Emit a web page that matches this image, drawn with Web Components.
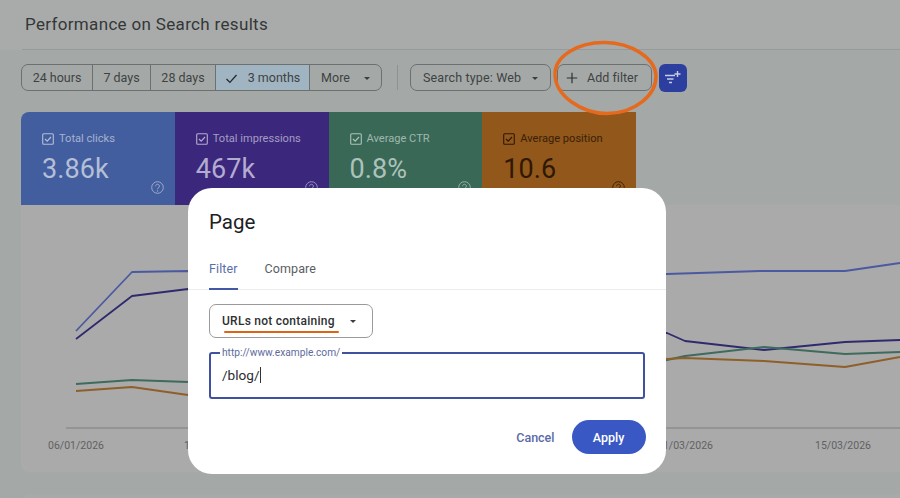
<!DOCTYPE html>
<html>
<head>
<meta charset="utf-8">
<title>Performance on Search results</title>
<style>
  html, body { margin: 0; height: 100%; }
  body { width: 900px; height: 498px; overflow: hidden; background: #a4a9a7; font-family: Roboto, "Liberation Sans", sans-serif; }
</style>
</head>
<body>
<gsc-page>
  <gsc-header slot="header" heading="Performance on Search results"></gsc-header>
  <gsc-toolbar slot="toolbar"></gsc-toolbar>
  <div slot="metrics" style="display:flex;width:615px">
    <metric-card label="Total clicks" value="3.86k" bg="#425e9f" fg="#b5bfd6" first></metric-card>
    <metric-card label="Total impressions" value="467k" bg="#3b287c" fg="#b3acd0"></metric-card>
    <metric-card label="Average CTR" value="0.8%" bg="#3a6857" fg="#adc2ba"></metric-card>
    <metric-card label="Average position" value="10.6" bg="#91571b" fg="#2f1804"></metric-card>
  </div>
  <gsc-chart slot="chart"></gsc-chart>
  <filter-dialog slot="overlay"></filter-dialog>
  <add-filter-mark slot="overlay"></add-filter-mark>
</gsc-page>

<script>
// page shell
const pageTemplate = document.createElement('template');
pageTemplate.innerHTML = `
  <style>
    :host { display: block; position: relative; width: 900px; height: 498px; overflow: hidden; background: #a4a9a7; }
    .top { background: #a9abaa; height: 50px; }
    .body { padding: 14px 0 0 21px; display: flex; flex-direction: column; }
    .metrics { margin-top: 21px; }
    .next { position: absolute; left: 24px; right: 0; top: 494px; height: 4px; background: #a8a9a9; border-radius: 8px 0 0 0; }
  </style>
  <div class="top"><slot name="header"></slot></div>
  <div class="body">
    <slot name="toolbar"></slot>
    <div class="metrics"><slot name="metrics"></slot></div>
    <slot name="chart"></slot>
  </div>
  <div class="next"></div>
  <slot name="overlay"></slot>
`;
class GscPage extends HTMLElement {
  constructor() {
    super();
    this.attachShadow({ mode: 'open' }).appendChild(pageTemplate.content.cloneNode(true));
  }
}
customElements.define('gsc-page', GscPage);

// title row
class GscHeader extends HTMLElement {
  constructor() {
    super();
    this.attachShadow({ mode: 'open' }).innerHTML = `
      <style>
        :host { display: block; height: 50px; box-sizing: border-box; margin-left: 22px; padding: 14px 0 0 3px; border-bottom: 1px solid #979a9a; color: #343737; font: 400 17px/21px Roboto, sans-serif; letter-spacing: .33px; }
      </style>
      <div id="t"></div>`;
  }
  connectedCallback() {
    this.shadowRoot.getElementById('t').textContent = this.getAttribute('heading') || '';
  }
}
customElements.define('gsc-header', GscHeader);

// date chips and filters
class GscToolbar extends HTMLElement {
  constructor() {
    super();
    this.attachShadow({ mode: 'open' }).innerHTML = `
      <style>
        :host { display: flex; align-items: center; height: 27px; font: 400 12.5px/1 Roboto, sans-serif; color: #3f4243; }
        .group { display: flex; height: 27px; box-sizing: border-box; border: 1px solid #6d7071; border-radius: 7px; overflow: hidden; }
        .group span { display: flex; align-items: center; justify-content: center; box-sizing: border-box; border-right: 1px solid #6d7071; padding-top: 1px; }
        .group span:last-child { border-right: 0; }
        .sel { background: #a0b4c1; gap: 10px; }
        .divider { width: 1px; height: 25px; background: #8f9292; margin: 0 12px 0 15px; }
        .btn { display: flex; align-items: center; height: 27px; box-sizing: border-box; border: 1px solid #6d7071; border-radius: 7px; padding-top: 1px; }
        .caret { width: 0; height: 0; border: 3.5px solid transparent; border-top: 3.5px solid #3b3e3f; border-bottom: 0; }
        .ai { width: 28px; height: 28px; margin-left: 7px; border-radius: 6px; background: #2d3f9e; display: flex; align-items: center; justify-content: center; }
      </style>
      <div class="group">
        <span style="width:71px">24 hours</span>
        <span style="width:58px">7 days</span>
        <span style="width:65px">28 days</span>
        <span class="sel" style="width:94px">
          <svg width="13" height="11" viewBox="0 0 13 11"><path d="M1.5 6l3.4 3.4L11.5 2" fill="none" stroke="#26292a" stroke-width="1.3"/></svg>
          3 months</span>
        <span style="width:71px;gap:14px">More <i class="caret"></i></span>
      </div>
      <div class="divider"></div>
      <div class="btn" style="width:141px;padding-left:12px;gap:11px;letter-spacing:.15px">Search type: Web <i class="caret"></i></div>
      <div class="btn" style="width:95px;margin-left:6px;padding-left:8px;gap:9px;letter-spacing:.03px">
        <svg width="12" height="12" viewBox="0 0 12 12"><path d="M6 .8v10.4M.8 6h10.4" stroke="#2e3131" stroke-width="1.2"/></svg>
        Add filter</div>
      <div class="ai">
        <svg width="18" height="16" viewBox="0 0 18 16"><path d="M1 5.5h10M3 9h6.5M5 12.5h3" stroke="#c7cee8" stroke-width="1.3" fill="none"/><path d="M13.5 1v6M10.5 4h6" stroke="#c7cee8" stroke-width="1.4"/></svg>
      </div>`;
  }
}
customElements.define('gsc-toolbar', GscToolbar);

// one coloured metric tile
class MetricCard extends HTMLElement {
  constructor() {
    super();
    this.attachShadow({ mode: 'open' }).innerHTML = `
      <style>
        :host { display: block; flex: 1; height: 93px; box-sizing: border-box; padding: 20px 0 0 21px; position: relative; font-family: Roboto, sans-serif; }
        .row { display: flex; align-items: center; gap: 5px; font-size: 11.1px; line-height: 14px; }
        .row span { opacity: .88; }
        .value { font-size: 27px; line-height: 32px; margin-top: 7px; letter-spacing: .1px; }
        .help { position: absolute; right: 11px; bottom: 11px; opacity: .8; }
      </style>
      <div class="row">
        <svg width="12" height="12" viewBox="0 0 12 12"><rect x=".7" y=".7" width="10.6" height="10.6" rx="1" fill="none" stroke="currentColor" stroke-width="1.1"/><path d="M3 6l2.2 2.2L9 4" fill="none" stroke="currentColor" stroke-width="1.2"/></svg>
        <span id="label"></span>
      </div>
      <div class="value" id="value"></div>
      <svg class="help" width="13" height="13" viewBox="0 0 13 13"><circle cx="6.5" cy="6.5" r="5.8" fill="none" stroke="currentColor" stroke-width="1"/><path d="M4.6 5.2a1.9 1.9 0 1 1 3 1.5c-.7.5-1.1.8-1.1 1.6" fill="none" stroke="currentColor" stroke-width="1"/><circle cx="6.5" cy="10" r=".7" fill="currentColor"/></svg>`;
  }
  connectedCallback() {
    const root = this.shadowRoot;
    root.getElementById('label').textContent = this.getAttribute('label');
    root.getElementById('value').textContent = this.getAttribute('value');
    this.style.background = this.getAttribute('bg');
    this.style.color = this.getAttribute('fg');
    if (this.hasAttribute('first')) this.style.borderTopLeftRadius = '8px';
  }
}
customElements.define('metric-card', MetricCard);

class GscChart extends HTMLElement {
  constructor() {
    super();
    this.attachShadow({ mode: 'open' }).innerHTML = `
      <style>
        :host { display: block; width: 879px; height: 267px; background: #aaaaaa; border-radius: 0 0 0 8px; }
        svg { display: block; }
        polyline { fill: none; stroke-width: 1.8; stroke-linejoin: round; }
        text { font: 400 10.5px Roboto, sans-serif; fill: #5f6162; text-anchor: middle; }
      </style>
      <svg width="879" height="267" viewBox="0 0 879 267">
        <line x1="45" y1="223" x2="879" y2="223" stroke="#7d7f7f"/>
        <polyline stroke="#4b5aa0" points="55,126 111,67 167,66 646,69 739,66 824,66 879,58"/>
        <polyline stroke="#2f2a6e" points="55,134 111,91 167,84 646,128 664,136 743,145 824,137 879,135"/>
        <polyline stroke="#3e6b5d" points="55,179 111,175 167,177 646,155 664,151 743,142 824,149 879,147"/>
        <polyline stroke="#8f5f2a" points="55,186 111,182 167,190 646,154 664,153 743,156 824,162 879,152"/>
        <text x="55" y="244">06/01/2026</text>
        <text x="191" y="244">18/01/2026</text>
        <text x="664" y="244">01/03/2026</text>
        <text x="822" y="244">15/03/2026</text>
      </svg>`;
  }
}
customElements.define('gsc-chart', GscChart);

// the Page filter dialog
class FilterDialog extends HTMLElement {
  constructor() {
    super();
    this.attachShadow({ mode: 'open' }).innerHTML = `
      <style>
        :host { position: absolute; left: 188px; top: 188px; width: 478px; height: 286px; box-sizing: border-box; background: #fff; border-radius: 24px; font-family: Roboto, sans-serif; color: #202124; display: flex; flex-direction: column; }
        h2 { margin: 0; padding: 21px 21px 0; font: 400 20.5px/26px Roboto, sans-serif; }
        .tabs { display: flex; gap: 27px; padding: 0 21px; margin-top: 21px; height: 33px; border-bottom: 1px solid #ececec; font-size: 12.5px; font-weight: 400; letter-spacing: .1px; }
        .tabs span { display: block; padding-top: 5px; box-sizing: border-box; height: 34px; color: #5a5e63; }
        .tabs .on { color: #5a6ea8; border-bottom: 2.5px solid #4457a6; }
        .select { position: relative; margin: 14px 0 0 21px; width: 164px; height: 34px; box-sizing: border-box; border: 1px solid #9a9a9a; border-radius: 7px; display: flex; align-items: center; justify-content: space-between; padding: 0 16px 0 12px; font-size: 12px; font-weight: 500; letter-spacing: .25px; color: #2e3033; }
        .caret { width: 0; height: 0; border: 3.5px solid transparent; border-top: 3.5px solid #3b3e3f; border-bottom: 0; }
        .mark { position: absolute; left: 14px; top: 25.5px; width: 115px; height: 2.5px; border-radius: 2px; background: #df6414; }
        fieldset { margin: 9px 21px 0; padding: 0 0 0 11px; height: 52px; box-sizing: border-box; border: 2px solid #3f519f; border-radius: 3px; }
        legend { margin-left: -2px; padding: 0 2px; font-size: 10.2px; line-height: 12px; color: #5d6b9c; }
        .val { font-size: 13.6px; line-height: 20px; margin-top: 6px; color: #2a2c2f; display: flex; align-items: center; }
        .val i { display: inline-block; width: 1px; height: 16px; background: #333; }
        .actions { display: flex; justify-content: flex-end; align-items: center; gap: 17px; margin: 21px 20.5px 0 0; font-size: 12.5px; font-weight: 500; }
        .cancel { color: #5a6ba8; }
        .apply { width: 74px; height: 34px; border-radius: 17px; background: #3a58c4; color: #fff; display: flex; align-items: center; justify-content: center; }
      </style>
      <h2>Page</h2>
      <div class="tabs"><span class="on">Filter</span><span>Compare</span></div>
      <div class="select">URLs not containing <i class="caret"></i><div class="mark"></div></div>
      <fieldset>
        <legend>http://www.example.com/</legend>
        <div class="val">/blog/<i></i></div>
      </fieldset>
      <div class="actions"><span class="cancel">Cancel</span><span class="apply">Apply</span></div>`;
  }
}
customElements.define('filter-dialog', FilterDialog);

// hand drawn ring round "Add filter"
class AddFilterMark extends HTMLElement {
  constructor() {
    super();
    this.attachShadow({ mode: 'open' }).innerHTML = `
      <style>
        :host { position: absolute; left: 550px; top: 38px; width: 112px; height: 80px; display: block; }
      </style>
      <svg width="112" height="80" viewBox="0 0 112 80">
        <path d="M5 36C5 17 30 4 55 4.5c26 .5 50 15 51 33 .8 19-21 38-49 38C32 75.5 5 58 5 36z" fill="none" stroke="#e66a1e" stroke-width="3.5"/>
      </svg>`;
  }
}
customElements.define('add-filter-mark', AddFilterMark);
</script>
</body>
</html>
